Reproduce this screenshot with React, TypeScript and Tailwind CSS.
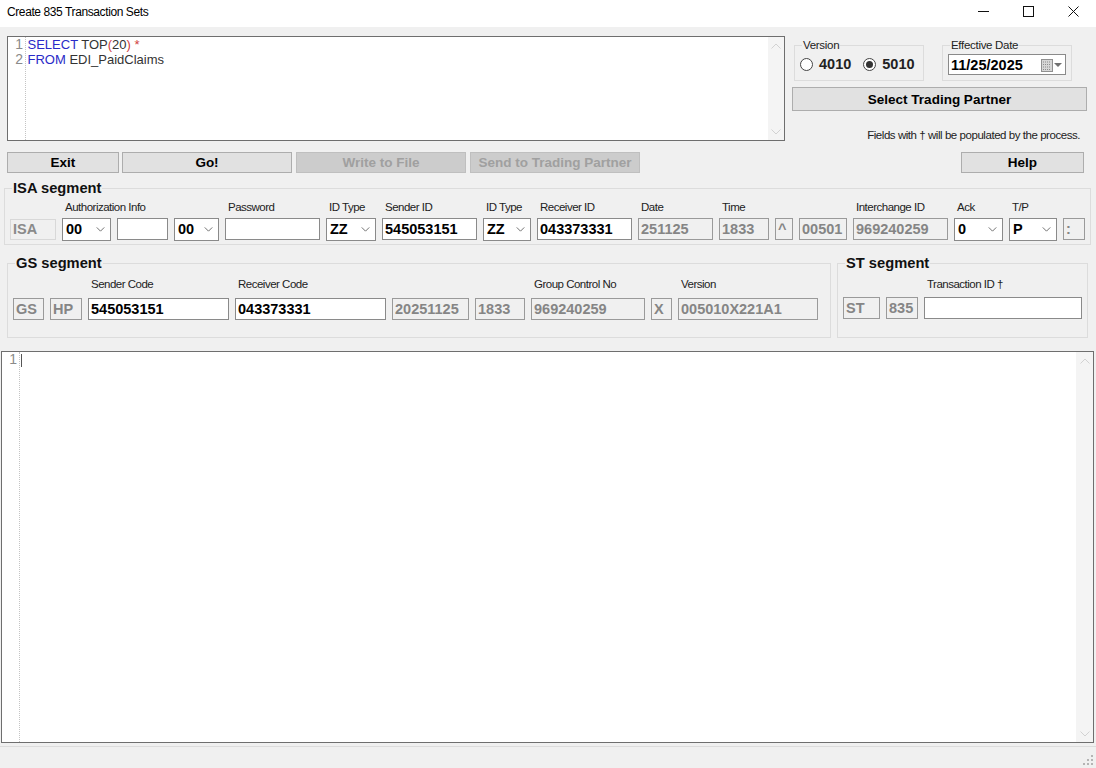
import type { ReactNode } from "react";

const font = "font-['Liberation_Sans',Arial,sans-serif]";

function Chevron({ size = 9, color = "#555" }: { size?: number; color?: string }) {
  return (
    <svg width={size} height={Math.round(size * 0.6)} viewBox="0 0 10 6" fill="none">
      <path d="M0.5 0.5L5 5L9.5 0.5" stroke={color} strokeWidth="1" />
    </svg>
  );
}

function Scrollbar({ className }: { className: string }) {
  return (
    <div className={`flex shrink-0 flex-col items-center justify-between bg-[#f4f4f4] pt-[6px] pb-[5px] ${className}`}>
      <div className="rotate-180">
        <Chevron size={10} color="#d2d2d2" />
      </div>
      <Chevron size={10} color="#d2d2d2" />
    </div>
  );
}

function Btn({ children, className, disabled }: { children: ReactNode; className: string; disabled?: boolean }) {
  return (
    <button
      className={`flex items-center justify-center border text-[13.5px] leading-none font-bold ${
        disabled ? "border-[#bfbfbf] bg-[#cccccc] text-[#a0a0a0]" : "border-[#adadad] bg-[#e1e1e1] text-black"
      } ${className}`}
    >
      {children}
    </button>
  );
}

// label sits over the field but never widens it
function Field({ label, gap = "mb-[4px]", children }: { label?: string; gap?: string; children: ReactNode }) {
  return (
    <div className="flex shrink-0 flex-col">
      <div className={`h-[14px] w-0 pl-[3px] text-[11.5px] leading-[14px] tracking-[-0.5px] whitespace-nowrap text-[#222] ${gap}`}>{label}</div>
      {children}
    </div>
  );
}

function Input({ value = "", width, off }: { value?: string; width: string; off?: boolean }) {
  return (
    <div
      className={`flex h-[22px] items-center overflow-hidden border pl-[2px] text-[14.5px] leading-none font-bold whitespace-nowrap ${width} ${
        off ? "border-[#9a9a9a] bg-[#f0f0f0] text-[#858585]" : "border-[#8a8a8a] bg-white text-black"
      }`}
    >
      {value}
    </div>
  );
}

function Combo({ value, width }: { value: string; width: string }) {
  return (
    <div className={`flex h-[23px] items-center justify-between border border-[#8a8a8a] bg-white pr-[5px] pl-[3px] text-[14.5px] leading-none font-bold ${width}`}>
      {value}
      <Chevron />
    </div>
  );
}

function Segment({ title, className, children }: { title: string; className: string; children: ReactNode }) {
  return (
    <fieldset className={`shrink-0 border border-[#dcdcdc] ${className}`}>
      <legend className="ml-[7px] px-px text-[14.7px] leading-[15px] font-bold text-[#111]">{title}</legend>
      {children}
    </fieldset>
  );
}

function Radio({ label, checked }: { label: string; checked?: boolean }) {
  return (
    <div className="flex items-center gap-[6px] text-[14.5px] leading-none font-bold text-[#222]">
      <div className="flex h-[13px] w-[13px] items-center justify-center rounded-full border border-[#444] bg-white">
        {checked && <div className="h-[7px] w-[7px] rounded-full bg-[#333]" />}
      </div>
      {label}
    </div>
  );
}

function Gutter({ className, children }: { className: string; children: ReactNode }) {
  return (
    <div className={`shrink-0 border-r border-dotted border-[#c4c4c4] pr-[2px] text-right text-[14px] leading-[15px] text-[#8a8a8a] ${className}`}>
      {children}
    </div>
  );
}

export default function App() {
  return (
    <div className={`flex h-[768px] w-[1096px] flex-col overflow-hidden bg-[#f0f0f0] ${font}`}>
      <div className="flex h-[27px] shrink-0 items-center bg-white pl-[7px] text-[12px] tracking-[-0.4px] text-black">
        <span className="-mt-[3px]">Create 835 Transaction Sets</span>
        <div className="-mt-[5px] ml-auto flex items-center gap-[34px] pr-[17px]">
          <svg width="11" height="11" viewBox="0 0 11 11">
            <path d="M0 5.5H11" stroke="#111" />
          </svg>
          <svg width="11" height="11" viewBox="0 0 11 11" fill="none">
            <rect x="0.5" y="0.5" width="10" height="10" stroke="#111" />
          </svg>
          <svg width="11" height="11" viewBox="0 0 11 11" fill="none">
            <path d="M0.5 0.5L10.5 10.5M10.5 0.5L0.5 10.5" stroke="#111" />
          </svg>
        </div>
      </div>

      <div className="mt-[9px] flex shrink-0 pl-[7px]">
        <div className="flex h-[105px] w-[778px] border border-[#6e6e6e] bg-white">
          <Gutter className="w-[18px]">
            <div>1</div>
            <div>2</div>
          </Gutter>
          <div className="flex-1 pl-[1.5px] text-[13px] leading-[15px] text-[#333]">
            <div>
              <span className="text-[#2a2ac8]">SELECT</span> TOP<span className="text-[#d04040]">(</span>20<span className="text-[#d04040]">) *</span>
            </div>
            <div>
              <span className="text-[#2a2ac8]">FROM</span> EDI_PaidClaims
            </div>
          </div>
          <Scrollbar className="w-[16px]" />
        </div>

        <div className="ml-[7px] flex w-[295px] flex-col">
          <div className="mt-[2px] flex gap-[18px] pl-[2px]">
            <fieldset className="h-[43px] w-[130px] border border-[#dcdcdc]">
              <legend className="ml-[7px] px-px text-[11.5px] leading-[14px] tracking-[-0.3px] text-[#222]">Version</legend>
              <div className="mt-[5px] flex gap-[12px] pl-[5px]">
                <Radio label="4010" />
                <Radio label="5010" checked />
              </div>
            </fieldset>
            <fieldset className="h-[43px] w-[130px] border border-[#dcdcdc]">
              <legend className="ml-[7px] px-px text-[11.5px] leading-[14px] tracking-[-0.3px] text-[#222]">Effective Date</legend>
              <div className="mt-[2px] ml-[5px] flex h-[21px] w-[118px] items-center justify-between border border-[#8a8a8a] bg-white pt-px pr-[3px] pl-[2px] text-[14.5px] leading-none font-bold">
                11/25/2025
                <div className="flex items-center gap-[1px]">
                  <svg width="12" height="13" viewBox="0 0 12 13">
                    <rect x="0.5" y="0.5" width="11" height="12" fill="#d6d6d6" stroke="#909090" />
                    <path d="M2 3H10M2 5.5H10M2 8H10M2 10.5H10" stroke="#8c8c8c" strokeDasharray="1 1" />
                  </svg>
                  <div className="h-0 w-0 border-x-[4px] border-t-[4px] border-x-transparent border-t-[#707070]" />
                </div>
              </div>
            </fieldset>
          </div>
          <Btn className="mt-[6px] h-[24px] w-[295px] pt-px">Select Trading Partner</Btn>
          <div className="mt-[17px] pr-[7px] text-right text-[11.5px] leading-[14px] tracking-[-0.45px] text-[#222]">
            Fields with † will be populated by the process.
          </div>
        </div>
      </div>

      <div className="mt-[10px] flex h-[21px] shrink-0 pl-[7px]">
        <Btn className="w-[112px]">Exit</Btn>
        <Btn className="ml-[3px] w-[170px]">Go!</Btn>
        <Btn className="ml-[4px] w-[170px]" disabled>
          Write to File
        </Btn>
        <Btn className="ml-[4px] w-[170px]" disabled>
          Send to Trading Partner
        </Btn>
        <Btn className="mr-[12px] ml-auto w-[123px]">Help</Btn>
      </div>

      <Segment title="ISA segment" className="mt-[8px] ml-[4px] h-[64px] w-[1087px]">
        <div className="mt-[4px] flex gap-[6px] pl-[5px]">
          <Field>
            <div className="mt-px flex h-[21px] w-[46px] items-center border border-[#d8d8d8] pl-[2px] text-[14.5px] leading-none font-bold text-[#8a8a8a]">ISA</div>
          </Field>
          <Field label="Authorization Info">
            <Combo value="00" width="w-[49px]" />
          </Field>
          <Field>
            <Input width="w-[51px]" />
          </Field>
          <Field>
            <Combo value="00" width="w-[45px]" />
          </Field>
          <Field label="Password">
            <Input width="w-[95px]" />
          </Field>
          <Field label="ID Type">
            <Combo value="ZZ" width="w-[50px]" />
          </Field>
          <Field label="Sender ID">
            <Input value="545053151" width="w-[95px]" />
          </Field>
          <Field label="ID Type">
            <Combo value="ZZ" width="w-[48px]" />
          </Field>
          <Field label="Receiver ID">
            <Input value="043373331" width="w-[95px]" />
          </Field>
          <Field label="Date">
            <Input value="251125" width="w-[75px]" off />
          </Field>
          <Field label="Time">
            <Input value="1833" width="w-[50px]" off />
          </Field>
          <Field>
            <Input value="^" width="w-[18px]" off />
          </Field>
          <Field>
            <Input value="00501" width="w-[48px]" off />
          </Field>
          <Field label="Interchange ID">
            <Input value="969240259" width="w-[95px]" off />
          </Field>
          <Field label="Ack">
            <Combo value="0" width="w-[49px]" />
          </Field>
          <Field label="T/P">
            <Combo value="P" width="w-[48px]" />
          </Field>
          <Field>
            <Input value=":" width="w-[22px]" off />
          </Field>
        </div>
      </Segment>

      <div className="mt-[11px] ml-[7px] flex shrink-0 gap-[6px]">
        <Segment title="GS segment" className="h-[82px] w-[824px]">
          <div className="mt-[6px] flex gap-[6px] pl-[5px]">
            <Field gap="mb-[7px]">
              <Input value="GS" width="w-[31px]" off />
            </Field>
            <Field gap="mb-[7px]">
              <Input value="HP" width="w-[32px]" off />
            </Field>
            <Field label="Sender Code" gap="mb-[7px]">
              <Input value="545053151" width="w-[141px]" />
            </Field>
            <Field label="Receiver Code" gap="mb-[7px]">
              <Input value="043373331" width="w-[151px]" />
            </Field>
            <Field gap="mb-[7px]">
              <Input value="20251125" width="w-[77px]" off />
            </Field>
            <Field gap="mb-[7px]">
              <Input value="1833" width="w-[50px]" off />
            </Field>
            <Field label="Group Control No" gap="mb-[7px]">
              <Input value="969240259" width="w-[114px]" off />
            </Field>
            <Field gap="mb-[7px]">
              <Input value="X" width="w-[21px]" off />
            </Field>
            <Field label="Version" gap="mb-[7px]">
              <Input value="005010X221A1" width="w-[140px]" off />
            </Field>
          </div>
        </Segment>
        <Segment title="ST segment" className="h-[82px] w-[251px]">
          <div className="mt-[6px] flex gap-[6px] pl-[5px]">
            <Field gap="mb-[6px]">
              <Input value="ST" width="w-[37px]" off />
            </Field>
            <Field gap="mb-[6px]">
              <Input value="835" width="w-[32px]" off />
            </Field>
            <Field label="Transaction ID †" gap="mb-[6px]">
              <Input width="w-[158px]" />
            </Field>
          </div>
        </Segment>
      </div>

      <div className="mt-[13px] ml-[1px] flex h-[392px] w-[1093px] shrink-0 border border-[#6e6e6e] bg-white">
        <Gutter className="w-[18px]">1</Gutter>
        <div className="flex-1 pt-[2px] pl-[1px]">
          <div className="h-[13px] w-px bg-[#555]" />
        </div>
        <Scrollbar className="w-[17px]" />
      </div>

      <div className="mt-[3px] flex flex-1 items-end justify-end border-t border-[#dcdcdc] pr-[2px] pb-[2px]">
        <svg width="11" height="11" viewBox="0 0 11 11" fill="#b4b4b4">
          <rect x="8" y="0" width="2" height="2" />
          <rect x="4" y="4" width="2" height="2" />
          <rect x="8" y="4" width="2" height="2" />
          <rect x="0" y="8" width="2" height="2" />
          <rect x="4" y="8" width="2" height="2" />
          <rect x="8" y="8" width="2" height="2" />
        </svg>
      </div>
    </div>
  );
}
